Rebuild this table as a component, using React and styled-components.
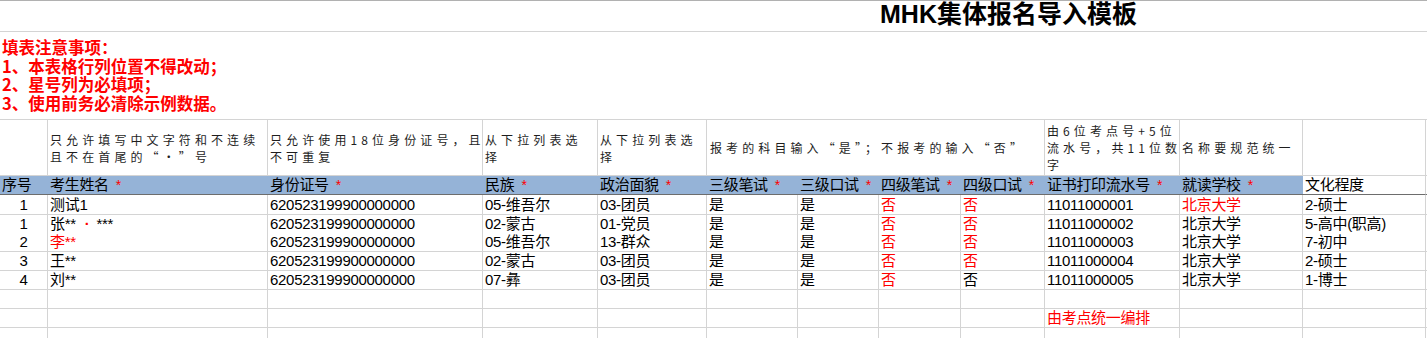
import React from 'react';
import styled, { createGlobalStyle } from 'styled-components';

const GRID = '#d4d4d4';
const RED = '#ff0000';
const COLS = '48px 220px 215px 115px 109px 91px 81px 82px 84px 135px 123px 123px 1px';
const FONT = '"Liberation Sans", "Noto Sans CJK SC", sans-serif';

const GlobalStyle = createGlobalStyle`
  html, body { margin: 0; padding: 0; background: #fff; }
  body { font-family: ${FONT}; color: #000; overflow: hidden; }
  * { box-sizing: border-box; }
`;

const Sheet = styled.div`
  width: 1427px;
  border-top: 1px solid #b1b1b1;
`;

const Row = styled.div`
  display: grid;
  grid-template-columns: ${COLS};
  height: ${(p) => p.$h}px;
`;

const TitleRow = styled(Row)`
  border-bottom: 1px solid ${GRID};
`;

const Title = styled.h1`
  grid-column: 8 / 13;
  margin: 0;
  padding: 0 0 4px 1px;
  display: flex;
  align-items: center;
  font: bold 25px/26px ${FONT};
  color: #000;
  white-space: nowrap;
`;

const Notes = styled.div`
  height: 88px;
  border-bottom: 1px solid ${GRID};
  padding: 6px 0 0 2px;
  color: ${RED};
  font: bold 16.5px/18.5px "Noto Sans CJK SC", "Liberation Sans", sans-serif;
`;

const Line = styled.div`
  white-space: nowrap;
`;

const Cell = styled.div`
  grid-column: ${(p) => (p.$span ? `span ${p.$span}` : 'auto')};
  display: flex;
  align-items: flex-end;
  justify-content: ${(p) => (p.$center ? 'center' : 'flex-start')};
  padding: 0 2px;
  border-right: ${(p) => (p.$noRight ? 'none' : `1px solid ${GRID}`)};
  border-bottom: 1px solid ${(p) => (p.$dark ? '#6d6d6d' : GRID)};
  background: ${(p) => (p.$blue ? '#95b3d7' : '#fff')};
  color: ${(p) => (p.$red ? RED : '#000')};
  font-size: 15px;
  line-height: 18px;
  letter-spacing: -0.3px;
  white-space: nowrap;
`;

const Hint = styled(Cell)`
  align-items: center;
  padding-left: ${(p) => (p.$pl ? p.$pl : 2)}px;
  font-family: "Noto Sans CJK SC", "Liberation Sans", sans-serif;
  font-size: 12px;
  line-height: 17px;
  letter-spacing: 4.1px;
  color: #1e1e1e;
`;

const HintText = styled.div`
  white-space: pre;
`;

const Star = styled.span`
  color: ${RED};
  margin-left: 7px;
  font-size: 14px;
`;

const Dot = styled.span`
  color: ${RED};
  padding: 0 7px 0 9px;
  font-weight: bold;
`;

const Red = styled.span`
  color: ${RED};
`;

const ID = '620523199900000000';

const hints = [
  { text: '' },
  { text: '只允许填写中文字符和不连续\n且不在首尾的“·”号' },
  { text: '只允许使用18位身份证号，且\n不可重复' },
  { text: '从下拉列表选\n择' },
  { text: '从下拉列表选\n择' },
  { text: '报考的科目输入“是”；不报考的输入“否”', span: 4, pl: 3 },
  { text: '由6位考点号+5位\n流水号，共11位数\n字' },
  { text: '名称要规范统一' },
  { text: '' },
];

const headers = [
  { t: '序号' },
  { t: '考生姓名', star: true },
  { t: '身份证号', star: true },
  { t: '民族', star: true },
  { t: '政治面貌', star: true },
  { t: '三级笔试', star: true },
  { t: '三级口试', star: true },
  { t: '四级笔试', star: true },
  { t: '四级口试', star: true },
  { t: '证书打印流水号', star: true },
  { t: '就读学校', star: true },
];

const data = [
  { no: '1', name: '测试1', nation: '05-维吾尔', pol: '03-团员', c: true, d: true, serial: '11011000001', schoolRed: true, edu: '2-硕士' },
  { no: '1', name: 'dot', nation: '02-蒙古', pol: '01-党员', c: true, d: true, serial: '11011000002', edu: '5-高中(职高)' },
  { no: '2', name: '李**', nameRed: true, nation: '05-维吾尔', pol: '13-群众', c: true, d: true, serial: '11011000003', edu: '7-初中' },
  { no: '3', name: '王**', nation: '02-蒙古', pol: '03-团员', c: true, d: true, serial: '11011000004', edu: '2-硕士' },
  { no: '4', name: '刘**', nation: '07-彝', pol: '03-团员', c: true, d: false, serial: '11011000005', edu: '1-博士' },
];

const dataHeights = [20, 18, 19, 19, 19];

function EmptyRow({ h, children }) {
  return (
    <Row $h={h}>
      {Array.from({ length: 12 }).map((_, i) =>
        i === 9 && children ? (
          <Cell key={i} $red>
            {children}
          </Cell>
        ) : (
          <Cell key={i} />
        )
      )}
      <Cell $noRight />
    </Row>
  );
}

export default function App() {
  return (
    <>
      <GlobalStyle />
      <Sheet>
        <TitleRow $h={31}>
          <Title>MHK集体报名导入模板</Title>
        </TitleRow>
        <Notes>
          <Line>填表注意事项：</Line>
          <Line>1、本表格行列位置不得改动；</Line>
          <Line>2、星号列为必填项；</Line>
          <Line>3、使用前务必清除示例数据。</Line>
        </Notes>

        <Row $h={56}>
          {hints.map((h, i) => (
            <Hint key={i} $span={h.span} $pl={h.pl}>
              <HintText>{h.text}</HintText>
            </Hint>
          ))}
          <Hint $noRight />
        </Row>

        <Row $h={19}>
          {headers.map((h, i) => (
            <Cell key={i} $blue $noRight $dark>
              {h.t}
              {h.star && <Star>*</Star>}
            </Cell>
          ))}
          <Cell $dark>文化程度</Cell>
          <Cell $dark $noRight />
        </Row>

        {data.map((r, i) => (
          <Row key={i} $h={dataHeights[i]}>
            <Cell $center>{r.no}</Cell>
            <Cell $red={r.nameRed}>
              {r.name === 'dot' ? (
                <span>
                  张**<Dot>·</Dot>***
                </span>
              ) : (
                r.name
              )}
            </Cell>
            <Cell>{ID}</Cell>
            <Cell>{r.nation}</Cell>
            <Cell>{r.pol}</Cell>
            <Cell>是</Cell>
            <Cell>是</Cell>
            <Cell $red={r.c}>否</Cell>
            <Cell $red={r.d}>否</Cell>
            <Cell>{r.serial}</Cell>
            <Cell $red={r.schoolRed}>北京大学</Cell>
            <Cell>{r.edu}</Cell>
            <Cell $noRight />
          </Row>
        ))}

        <EmptyRow h={19} />
        <EmptyRow h={19}>
          <Red>由考点统一编排</Red>
        </EmptyRow>
        <EmptyRow h={19} />
      </Sheet>
    </>
  );
}
